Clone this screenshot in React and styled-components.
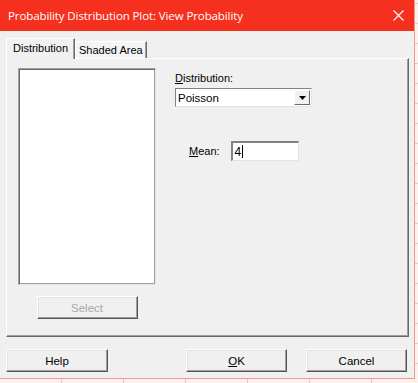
import React from "react";
import styled, { createGlobalStyle } from "styled-components";

const GlobalStyle = createGlobalStyle`
  html, body {
    margin: 0;
    padding: 0;
  }
  body {
    width: 418px;
    height: 383px;
    overflow: hidden;
    font-family: "Liberation Sans", Arial, sans-serif;
    background-color: #fbf0ed;
    background-image:
      repeating-linear-gradient(90deg, transparent 0 61px, #e2c9c3 61px 62px),
      repeating-linear-gradient(0deg, transparent 0 19px, #e2c9c3 19px 20px);
  }
`;

const Window = styled.div`
  width: 415px;
  height: 379px;
  box-sizing: border-box;
  border-right: 1px solid #ef9a8a;
  border-bottom: 1px solid #ef9a8a;
  background: #f0f0f0;
  display: flex;
  flex-direction: column;
`;

const TitleBar = styled.div`
  height: 31px;
  flex: none;
  background: #f5301f;
  color: #fff;
  display: flex;
  align-items: center;
  justify-content: space-between;
  padding: 0 10px 0 8px;
  font-family: "Open Sans", "Liberation Sans", sans-serif;
  font-size: 11.5px;
  letter-spacing: -0.1px;
`;

const CloseIcon = () => (
  <svg width="11" height="11" viewBox="0 0 11 11">
    <path d="M0.5 0.5 L10.5 10.5 M10.5 0.5 L0.5 10.5" stroke="#fff" strokeWidth="1.1" fill="none" />
  </svg>
);

const Body = styled.div`
  flex: 1;
  padding: 7px 6px 0 6px;
  display: flex;
  flex-direction: column;
  font-size: 11px;
  color: #000;
`;

const TabStrip = styled.div`
  display: flex;
  align-items: flex-end;
  height: 20px;
  position: relative;
  z-index: 1;
`;

const Tab = styled.div`
  box-sizing: border-box;
  height: ${({ active }) => (active ? "21px" : "17px")};
  margin-bottom: ${({ active }) => (active ? "-1px" : "0")};
  padding: ${({ active }) => (active ? "3px 6px 0 6px" : "2px 3px 0 3px")};
  background: ${({ active }) => (active ? "#f0f0f0" : "#f4f4f4")};
  border-top: 1px solid #ffffff;
  border-left: 1px solid #ffffff;
  border-right: 1px solid #696969;
  box-shadow: inset -1px 0 #a0a0a0;
  white-space: nowrap;
`;

const Panel = styled.div`
  box-sizing: border-box;
  width: 403px;
  height: 279px;
  border-top: 1px solid #ffffff;
  border-left: 1px solid #ffffff;
  border-right: 1px solid #696969;
  border-bottom: 1px solid #696969;
  box-shadow: inset -1px -1px #a0a0a0;
  padding: 9px 0 0 11px;
  display: flex;
  gap: 19px;
`;

const LeftColumn = styled.div`
  display: flex;
  flex-direction: column;
  align-items: center;
  gap: 11px;
  width: 138px;
`;

const ListBox = styled.div`
  box-sizing: border-box;
  width: 138px;
  height: 217px;
  background: #fff;
  border-top: 1px solid #a0a0a0;
  border-left: 1px solid #a0a0a0;
  border-right: 1px solid #e3e3e3;
  border-bottom: 1px solid #e3e3e3;
  box-shadow: inset 1px 1px #696969, inset -1px -1px #a0a0a0;
`;

const Button = styled.button`
  box-sizing: border-box;
  width: ${({ w }) => w || 101}px;
  height: 23px;
  padding: 0;
  margin: 0;
  background: #f0f0f0;
  border: none;
  border-top: 1px solid #ffffff;
  border-left: 1px solid #ffffff;
  border-right: 1px solid #555;
  border-bottom: 1px solid #555;
  box-shadow: inset -1px -1px #a0a0a0, inset 1px 1px #e3e3e3;
  font-family: "Liberation Sans", Arial, sans-serif;
  font-size: 11.5px;
  color: ${({ disabled }) => (disabled ? "#a6a6a6" : "#000")};
  outline: none;
`;

const RightColumn = styled.div`
  display: flex;
  flex-direction: column;
  padding-top: 3px;
`;

const Label = styled.div`
  line-height: 14px;
  white-space: nowrap;
  u {
    text-decoration: underline;
    text-underline-offset: 1px;
  }
`;

const Select = styled.div`
  box-sizing: border-box;
  margin-top: 3px;
  width: 137px;
  height: 19px;
  background: #fff;
  border-top: 1px solid #828282;
  border-left: 1px solid #828282;
  border-right: 1px solid #e3e3e3;
  border-bottom: 1px solid #e3e3e3;
  display: flex;
  align-items: center;
  justify-content: space-between;
  padding: 0 1px 0 2px;
  font-size: 11.5px;
`;

const SelectButton = styled.div`
  box-sizing: border-box;
  width: 16px;
  height: 15px;
  background: #f0f0f0;
  border-top: 1px solid #fff;
  border-left: 1px solid #fff;
  border-right: 1px solid #696969;
  border-bottom: 1px solid #696969;
  display: flex;
  align-items: center;
  justify-content: center;
`;

const ArrowDown = () => (
  <svg width="7" height="4" viewBox="0 0 7 4">
    <path d="M0 0 H7 L3.5 4 Z" fill="#000" />
  </svg>
);

const FieldRow = styled.div`
  margin-top: 34px;
  padding-left: 14px;
  display: flex;
  align-items: center;
  gap: 11px;
`;

const Input = styled.div`
  box-sizing: border-box;
  width: 68px;
  height: 20px;
  background: #fff;
  border-top: 2px solid #828282;
  border-left: 2px solid #828282;
  border-right: 1px solid #e3e3e3;
  border-bottom: 1px solid #e3e3e3;
  display: flex;
  align-items: center;
  padding-left: 2px;
  font-size: 12px;
`;

const Caret = styled.span`
  display: inline-block;
  width: 1px;
  height: 13px;
  background: #000;
  margin-left: 1px;
`;

const Footer = styled.div`
  margin-top: 12px;
  display: flex;
  align-items: center;
`;

const Spacer = styled.div`
  width: ${({ w }) => w}px;
  flex: none;
`;

export default function App() {
  return (
    <>
      <GlobalStyle />
      <Window>
        <TitleBar>
          <span>Probability Distribution Plot: View Probability</span>
          <CloseIcon />
        </TitleBar>
        <Body>
          <TabStrip>
            <Tab active>Distribution</Tab>
            <Tab>Shaded Area</Tab>
          </TabStrip>
          <Panel>
            <LeftColumn>
              <ListBox />
              <Button disabled>Select</Button>
            </LeftColumn>
            <RightColumn>
              <Label>
                <u>D</u>istribution:
              </Label>
              <Select>
                <span>Poisson</span>
                <SelectButton>
                  <ArrowDown />
                </SelectButton>
              </Select>
              <FieldRow>
                <Label>
                  <u>M</u>ean:
                </Label>
                <Input>
                  4<Caret />
                </Input>
              </FieldRow>
            </RightColumn>
          </Panel>
          <Footer>
            <Button w={102}>Help</Button>
            <Spacer w={78} />
            <Button>
              <u>O</u>K
            </Button>
            <Spacer w={19} />
            <Button>Cancel</Button>
          </Footer>
        </Body>
      </Window>
    </>
  );
}
